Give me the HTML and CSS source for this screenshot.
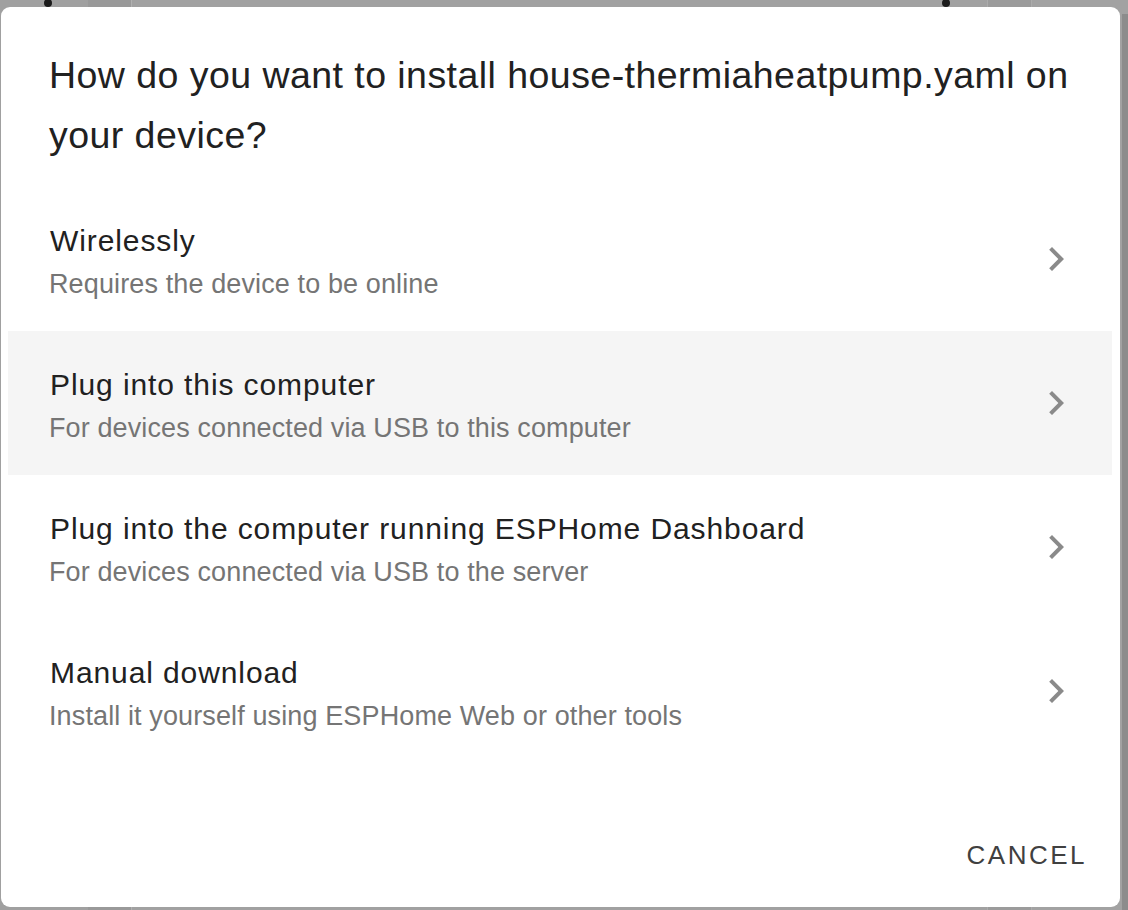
FILE: index.html
```html
<!DOCTYPE html>
<html lang="en">
<head>
<meta charset="utf-8">
<title>Install</title>
<link rel="stylesheet" href="styles.css">
</head>
<body>
<div class="screen">
  <div class="behind">
    <div class="bg-col c1"><span class="dot"></span></div>
    <div class="bg-col c2"></div>
    <div class="bg-col c3"><span class="dot"></span></div>
    <div class="bg-col c4"></div>
    <div class="bg-col c5"><div class="scrollbar"></div></div>
  </div>
  <div class="dialog" role="dialog">
    <h2 class="title">How do you want to install house-thermiaheatpump.yaml on your device?</h2>
    <ul class="options">
      <li class="option">
        <div class="text"><span class="primary">Wirelessly</span><span class="secondary">Requires the device to be online</span></div>
        <svg class="chevron" viewBox="0 0 24 24"><path d="M8.59,16.58L13.17,12L8.59,7.41L10,6L16,12L10,18L8.59,16.58Z"/></svg>
      </li>
      <li class="option active">
        <div class="text"><span class="primary">Plug into this computer</span><span class="secondary">For devices connected via USB to this computer</span></div>
        <svg class="chevron" viewBox="0 0 24 24"><path d="M8.59,16.58L13.17,12L8.59,7.41L10,6L16,12L10,18L8.59,16.58Z"/></svg>
      </li>
      <li class="option">
        <div class="text"><span class="primary">Plug into the computer running ESPHome Dashboard</span><span class="secondary">For devices connected via USB to the server</span></div>
        <svg class="chevron" viewBox="0 0 24 24"><path d="M8.59,16.58L13.17,12L8.59,7.41L10,6L16,12L10,18L8.59,16.58Z"/></svg>
      </li>
      <li class="option">
        <div class="text"><span class="primary">Manual download</span><span class="secondary">Install it yourself using ESPHome Web or other tools</span></div>
        <svg class="chevron" viewBox="0 0 24 24"><path d="M8.59,16.58L13.17,12L8.59,7.41L10,6L16,12L10,18L8.59,16.58Z"/></svg>
      </li>
    </ul>
    <div class="actions"><button class="btn">CANCEL</button></div>
  </div>
</div>
</body>
</html>
```
FILE: styles.css
```css
* { box-sizing: border-box; }
body {
  margin: 0;
  background: #9d9d9d;
  font-family: "Liberation Sans", Arial, sans-serif;
}
.screen {
  position: relative;
  width: 1128px;
  height: 910px;
  overflow: hidden;
}
.behind {
  display: flex;
  height: 100%;
}
.bg-col { height: 100%; }
.c1 { width: 88px; background: #a0a0a0; padding-left: 44px; }
.c2 { width: 44px; background: #999999; border-right: 1px solid #b0b0b0; }
.c3 { width: 855px; background: #a1a1a1; padding-left: 810px; }
.c4 { width: 44px; background: #9b9b9b; border-left: 1px solid #ababab; }
.c5 {
  flex: 1;
  background: #a2a2a2;
  border-left: 1px solid #ababab;
  display: flex;
  justify-content: flex-end;
  padding-top: 14px;
}
.scrollbar { width: 6px; background: #8c8c8c; }
.dot {
  display: block;
  width: 8px;
  height: 8px;
  border-radius: 50%;
  background: #1b1b1b;
  margin-top: -1px;
}
.dialog {
  position: absolute;
  top: 7px;
  left: 1px;
  width: 1119px;
  height: 900px;
  background: #ffffff;
  border-radius: 9px;
  display: flex;
  flex-direction: column;
}
.title {
  margin: 0;
  padding: 38px 12px 0 48px;
  font-size: 37.5px;
  line-height: 60px;
  font-weight: 400;
  color: #212121;
  letter-spacing: 0.45px;
}
.options {
  list-style: none;
  margin: 22px 8px 0 7px;
  padding: 0;
}
.option {
  display: flex;
  align-items: center;
  height: 144px;
  padding: 0 32px 0 41px;
}
.option.active { background: #f5f5f5; }
.text {
  flex: 1;
  display: flex;
  flex-direction: column;
  gap: 3px;
  padding-top: 7px;
}
.primary {
  font-size: 30px;
  line-height: 40px;
  color: #212121;
  letter-spacing: 0.9px;
  margin-left: 1px;
}
.secondary {
  font-size: 27px;
  line-height: 40px;
  color: #757575;
  letter-spacing: 0.12px;
}
.chevron {
  width: 48px;
  height: 48px;
  fill: #8a8a8a;
  flex: none;
}
.actions {
  margin-top: auto;
  display: flex;
  justify-content: flex-end;
  padding: 0 33px 34px 0;
}
.btn {
  font-family: inherit;
  font-size: 26px;
  line-height: 36px;
  letter-spacing: 2.5px;
  color: #404040;
  background: none;
  border: 0;
  padding: 0;
}
```
